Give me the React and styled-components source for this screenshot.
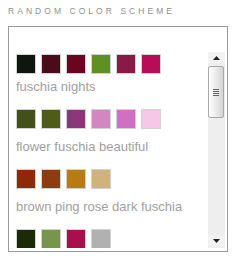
import React from "react";
import styled, { createGlobalStyle } from "styled-components";

const GlobalStyle = createGlobalStyle`
  body {
    margin: 0;
    background: #fff;
    font-family: "Liberation Sans", Arial, sans-serif;
  }
`;

const Page = styled.div`
  width: 241px;
  height: 267px;
  padding: 6px 0 0 8px;
  box-sizing: border-box;
`;

const Title = styled.h3`
  margin: 0 0 10px;
  font-size: 8.5px;
  line-height: 10px;
  font-weight: normal;
  letter-spacing: 3.05px;
  color: #8f8f8f;
  white-space: nowrap;
`;

const Box = styled.div`
  width: 220px;
  height: 226px;
  box-sizing: border-box;
  border: 1px solid #9a9a9a;
  padding: 25px 2px 3px 7px;
  display: flex;
`;

const List = styled.div`
  flex: 1;
  overflow: hidden;
  padding-top: 2px;
`;

const Swatches = styled.div`
  display: flex;
  gap: 5px;
  margin-bottom: 10px;
`;

const Item = styled.div`
  & + & {
    margin-top: 15px;
  }
  &:first-child ${Swatches} {
    margin-bottom: 5px;
  }
`;

const Swatch = styled.div`
  width: 20px;
  height: 20px;
  box-sizing: border-box;
  border: 1px solid #d2d2d2;
  background: ${(p) => p.color};
`;

const Name = styled.div`
  font-size: 13px;
  line-height: 15px;
  color: #a0a0a0;
  white-space: nowrap;
`;

const ScrollBar = styled.div`
  width: 17px;
  display: flex;
  flex-direction: column;
  background: #eeeeee;
`;

const Arrow = styled.div`
  height: 11px;
  display: flex;
  align-items: center;
  justify-content: center;
  background: #f2f2f2;
  margin: ${(p) => (p.down ? "auto 0 2px" : "0")};
`;

const Thumb = styled.div`
  margin: 3px 1px 0 0;
  height: 52px;
  box-sizing: border-box;
  border: 1px solid #a8a8a8;
  border-radius: 2px;
  background: linear-gradient(to right, #ffffff, #e6e6e6 60%, #d4d4d4);
  display: flex;
  flex-direction: column;
  align-items: center;
  justify-content: center;
  gap: 1px;
`;

const Grip = styled.span`
  width: 6px;
  height: 1px;
  background: #6a6a6a;
`;

// the last scheme is scrolled half into view, its name is below the fold
const schemes = [
  {
    name: "fuschia nights",
    colors: ["#0f150f", "#4b0b1b", "#6a0420", "#5e9122", "#8a1946", "#b90c58"],
  },
  {
    name: "flower fuschia beautiful",
    colors: ["#435018", "#4f5c17", "#8b3779", "#d287c1", "#d26fc4", "#f8c6e6"],
  },
  {
    name: "brown ping rose dark fuschia",
    colors: ["#8c2a06", "#8c3c0e", "#b87a12", "#d1b27a"],
  },
  {
    colors: ["#1b2a07", "#789649", "#a80f4c", "#b1b1b1"],
  },
];

const TriangleUp = () => (
  <svg width="7" height="4" viewBox="0 0 7 4">
    <path d="M3.5 0 L7 4 L0 4 Z" fill="#222" />
  </svg>
);

const TriangleDown = () => (
  <svg width="7" height="4" viewBox="0 0 7 4">
    <path d="M0 0 L7 0 L3.5 4 Z" fill="#222" />
  </svg>
);

const App = () => {
  return (
    <Page>
      <GlobalStyle />
      <Title>RANDOM COLOR SCHEME</Title>
      <Box>
        <List>
          {schemes.map((scheme, idx) => (
            <Item key={idx}>
              <Swatches>
                {scheme.colors.map((c) => (
                  <Swatch key={c} color={c} />
                ))}
              </Swatches>
              {scheme.name && <Name>{scheme.name}</Name>}
            </Item>
          ))}
        </List>
        <ScrollBar>
          <Arrow>
            <TriangleUp />
          </Arrow>
          <Thumb>
            <Grip />
            <Grip />
            <Grip />
            <Grip />
          </Thumb>
          <Arrow down>
            <TriangleDown />
          </Arrow>
        </ScrollBar>
      </Box>
    </Page>
  );
};

export default App;
